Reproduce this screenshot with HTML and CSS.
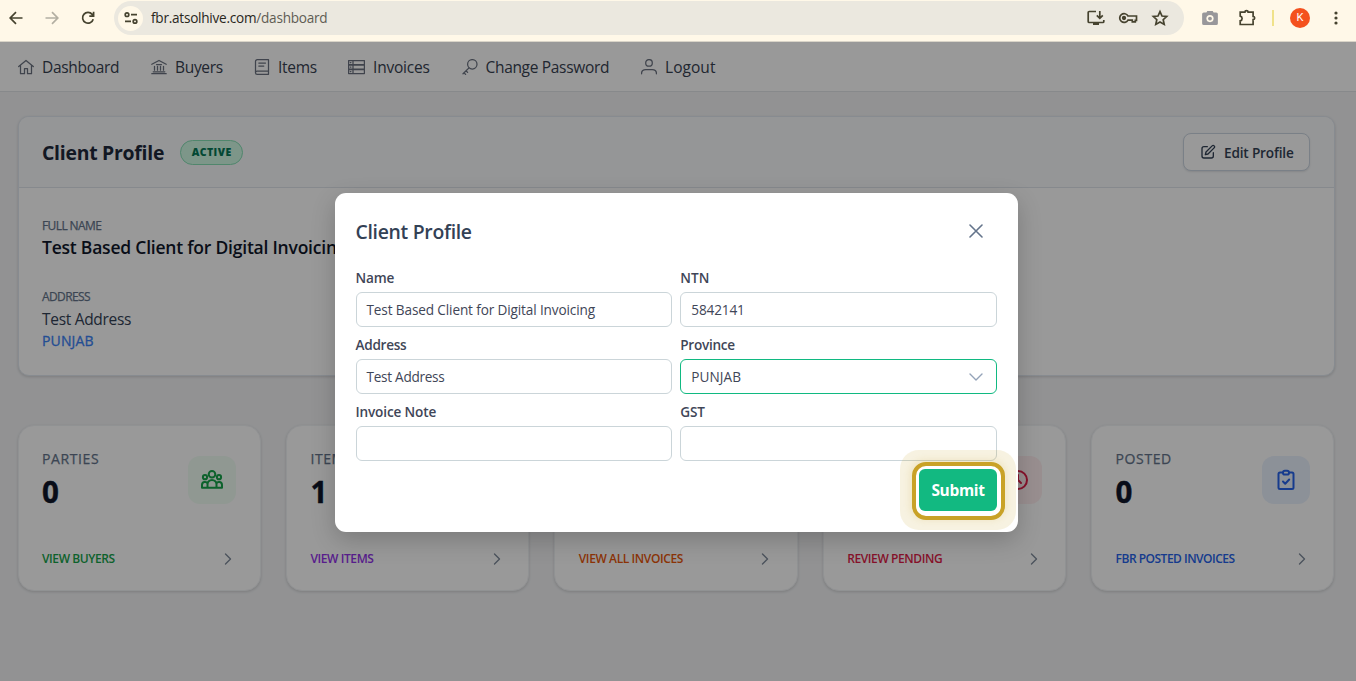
FILE: index.html
```html
<!DOCTYPE html>
<html lang="en">
<head>
<meta charset="utf-8">
<title>Dashboard</title>
<link rel="stylesheet" href="styles.css">
</head>
<body>
<header class="chrome">
  <div class="chrome-nav">
    <svg width="20" height="20" viewBox="0 0 20 20" class="ci"><path d="M16.5 10H4.5M10 4.2L4.2 10l5.800 5.800"/></svg>
    <svg width="20" height="20" viewBox="0 0 20 20" class="ci faded"><path d="M3.500 10h12M10 4.200l5.800 5.800-5.800 5.800"/></svg>
    <svg width="20" height="20" viewBox="0 0 20 20" class="ci"><path d="M15.200 11.200A5.400 5.400 0 1 1 14.200 6.400L15.400 7.800M15.600 3.800v4.300h-4.300"/></svg>
  </div>
  <div class="omnibox">
    <span class="site"><svg width="16" height="16" viewBox="0 0 16 16" class="ci"><circle cx="4" cy="4.700" r="1.800"/><path d="M8 4.700h6M2 11.400h6"/><circle cx="12" cy="11.400" r="1.800"/></svg></span>
    <span class="url"><span class="url-host">fbr.atsolhive.com</span><span class="url-path">/dashboard</span></span>
    <span class="omni-icons">
      <svg width="20" height="20" viewBox="0 0 20 20" class="ci"><path d="M10 3.500H3.200a1 1 0 0 0-1 1v9a1 1 0 0 0 1 1h13.600a1 1 0 0 0 1-1V12M13.800 3v7M10.800 7.400l3 3 3-3M7 16.200h6"/></svg>
      <svg width="20" height="20" viewBox="0 0 20 20" class="ci"><path d="M10 8h8.500v4.400h-1.200v1.500h-3v-1.800H10A4.400 4.400 0 1 1 10 8z"/><circle cx="6" cy="10" r="1.300" class="solid"/></svg>
      <svg width="20" height="20" viewBox="0 0 20 20" class="ci"><path d="M10 3.600l2 4.400 4.700.5-3.500 3.200 1 4.700-4.200-2.500-4.200 2.500 1-4.700L3.300 8.500l4.700-.5z"/></svg>
    </span>
  </div>
  <svg width="18" height="18" viewBox="0 0 16 16" class="camera"><path d="M4.800 3L5.600 1.700h4.800L11.200 3h2.300A1.500 1.500 0 0 1 15 4.500v8.300a1.500 1.500 0 0 1-1.500 1.500h-11A1.500 1.500 0 0 1 1 12.800V4.500A1.500 1.500 0 0 1 2.500 3z"/><circle cx="8" cy="8.500" r="3.200" class="lens"/><circle cx="8" cy="8.500" r="1.700"/></svg>
  <svg width="20" height="20" viewBox="0 0 20 20" class="ci ext"><path d="M3.200 4.200h4.700a1.600 1.600 0 0 1 3.200 0h5v4.300a1.600 1.600 0 0 1 0 3.200v4.800H3.200v-3.700a2.400 2.400 0 0 0 0-4.700z"/></svg>
  <span class="sep"></span>
  <span class="avatar">K</span>
  <svg width="6" height="16" viewBox="0 0 6 16" class="dots"><circle cx="3" cy="3" r="1.600"/><circle cx="3" cy="8" r="1.600"/><circle cx="3" cy="13" r="1.600"/></svg>
</header>
<div class="app">
  <nav class="nav">
    <a class="n1"><svg width="16" height="16" viewBox="0 0 16 16"><path d="M.7 7.600L8 1.500l7.300 6.100M2.500 6.500v8.200h4v-5.200h3v5.200h4V6.500"/></svg><span>Dashboard</span></a>
    <a class="n2"><svg width="16" height="16" viewBox="0 0 16 16"><path d="M.8 5.300L8 1.500l7.200 3.800M5.500 5.500h5M.8 14.700h14.400M2.200 12.800h11.600M3.500 7.300v3.900M6.500 7.300v3.900M9.500 7.300v3.900M12.500 7.300v3.900"/></svg><span>Buyers</span></a>
    <a class="n3"><svg width="16" height="16" viewBox="0 0 16 16"><path d="M14.500 12V.7H3.200A1.700 1.700 0 0 0 1.500 2.400v11.300A1.600 1.600 0 0 0 3.100 15.300h11.400V12H3.100a1.600 1.600 0 0 0-1.600 1.600M4.800 4h6.700M4.800 7h5"/></svg><span>Items</span></a>
    <a class="n4"><svg width="17" height="16" viewBox="0 0 17 16"><path d="M.6 1.500h15.800v4H.6zM.6 6h15.800v4H.6zM.6 10.500h15.800v4H.6zM2.300 3.500h.6M2.300 8h.6M2.300 12.500h.6M5 1.500v13"/></svg><span>Invoices</span></a>
    <a class="n5"><svg width="16" height="16" viewBox="0 0 16 16"><circle cx="10.300" cy="5.300" r="4.700"/><path d="M7 8.900L1 14.800M2 13.800l1.600 1.600M4 11.800l1.600 1.600"/></svg><span>Change Password</span></a>
    <a class="n6"><svg width="16" height="16" viewBox="0 0 16 16"><circle cx="8" cy="3.900" r="3.300"/><path d="M.6 14.800v-.6c0-2.400 2-3.700 4.200-3.700h6.400c2.200 0 4.200 1.300 4.200 3.700v.6"/></svg><span>Logout</span></a>
  </nav>
  <main class="main">
    <section class="profile">
      <div class="profile-head">
        <h2>Client Profile</h2>
        <span class="badge">ACTIVE</span>
        <button class="edit"><svg width="16" height="16" viewBox="0 0 24 24"><path d="M11 4H6a3 3 0 0 0-3 3v11a3 3 0 0 0 3 3h11a3 3 0 0 0 3-3v-5M18.200 2.800a2.100 2.100 0 0 1 3 3L12 15l-4 1 1-4z"/></svg><span>Edit Profile</span></button>
      </div>
      <div class="profile-body">
        <div class="cap">FULL NAME</div>
        <div class="full">Test Based Client for Digital Invoicing</div>
        <div class="cap cap2">ADDRESS</div>
        <div class="addr">Test Address</div>
        <div class="prov">PUNJAB</div>
      </div>
    </section>
    <section class="cards">
      <article class="card green">
        <div class="top"><div><div class="lab">PARTIES</div><div class="num">0</div></div>
        <span class="tile"><svg width="24" height="24" viewBox="0 0 24 24"><circle cx="12" cy="6.300" r="3.300"/><circle cx="5" cy="9.200" r="2.100"/><circle cx="19" cy="9.200" r="2.100"/><path d="M7.500 19.800v-3.300a4.500 4.500 0 0 1 9 0v3.300zM7.500 19.800H2v-2.600a3 3 0 0 1 5.700-1.500M16.500 19.800H22v-2.600a3 3 0 0 0-5.700-1.500"/></svg></span></div>
        <div class="foot"><span>VIEW BUYERS</span><svg class="chev" width="8" height="12" viewBox="0 0 8 12"><path d="M1.500 1l5 5-5 5"/></svg></div>
      </article>
      <article class="card purple">
        <div class="top"><div><div class="lab">ITEMS</div><div class="num">1</div></div></div>
        <div class="foot"><span>VIEW ITEMS</span><svg class="chev" width="8" height="12" viewBox="0 0 8 12"><path d="M1.500 1l5 5-5 5"/></svg></div>
      </article>
      <article class="card orange">
        <div class="top"><div><div class="lab">INVOICES</div><div class="num">0</div></div></div>
        <div class="foot"><span>VIEW ALL INVOICES</span><svg class="chev" width="8" height="12" viewBox="0 0 8 12"><path d="M1.500 1l5 5-5 5"/></svg></div>
      </article>
      <article class="card rose">
        <div class="top"><div><div class="lab">PENDING</div><div class="num">0</div></div>
        <span class="tile"><svg width="24" height="24" viewBox="0 0 24 24"><circle cx="12" cy="12" r="9"/><path d="M12 7v5l3 3"/></svg></span></div>
        <div class="foot"><span>REVIEW PENDING</span><svg class="chev" width="8" height="12" viewBox="0 0 8 12"><path d="M1.500 1l5 5-5 5"/></svg></div>
      </article>
      <article class="card blue">
        <div class="top"><div><div class="lab">POSTED</div><div class="num">0</div></div>
        <span class="tile"><svg width="24" height="24" viewBox="0 0 24 24"><path d="M9 4.500H6A1.500 1.500 0 0 0 4.500 6v13.500A1.500 1.500 0 0 0 6 21h12a1.500 1.500 0 0 0 1.500-1.500V6A1.500 1.500 0 0 0 18 4.500h-3"/><rect x="9" y="2.800" width="6" height="3.800" rx="1.900"/><path d="M9 13.500l2.200 2.200 4-4.200"/></svg></span></div>
        <div class="foot"><span>FBR POSTED INVOICES</span><svg class="chev" width="8" height="12" viewBox="0 0 8 12"><path d="M1.500 1l5 5-5 5"/></svg></div>
      </article>
    </section>
  </main>
  <div class="overlay">
    <div class="modal">
      <div class="modal-head"><h3>Client Profile</h3><svg width="14" height="14" viewBox="0 0 14 14"><path d="M1 1l12 12M13 1L1 13"/></svg></div>
      <div class="form">
        <label><b>Name</b><span class="field"><span>Test Based Client for Digital Invoicing</span></span></label>
        <label><b class="wide">NTN</b><span class="field"><span>5842141</span></span></label>
        <label><b class="tight">Address</b><span class="field"><span class="tight">Test Address</span></span></label>
        <label><b class="tight">Province</b><span class="field focus"><span>PUNJAB</span><svg width="14" height="8" viewBox="0 0 14 8"><path d="M1 1l6 6 6-6"/></svg></span></label>
        <label><b>Invoice Note</b><span class="field"></span></label>
        <label><b>GST</b><span class="field"></span></label>
      </div>
      <div class="actions"><button class="submit">Submit</button></div>
    </div>
  </div>
</div>
</body>
</html>
```
FILE: styles.css
```css
* { box-sizing: border-box; }
body { margin: 0; font-family: "Open Sans", "Noto Sans", sans-serif; height: 681px; overflow: hidden; display: flex; flex-direction: column; white-space: nowrap; }
h2, h3 { margin: 0; }
button { font-family: inherit; }
svg { fill: none; stroke-linecap: round; stroke-linejoin: round; flex: none; }

.chrome { height: 42px; flex: none; background: #fff8e8; border-bottom: 1px solid #d9d4c8; display: flex; align-items: center; padding: 0 17px 5px 6px; }
.ci { stroke: #46432f; stroke-width: 1.7; stroke-linecap: butt; stroke-linejoin: miter; }
.ci .solid { fill: #46432f; }
.faded { stroke: #b3afa2; }
.chrome-nav { display: flex; gap: 16px; width: 108px; }
.omnibox { display: flex; align-items: center; width: 1070px; height: 34px; border-radius: 17px; background: #ebe8df; padding: 0 14px 0 4px; }
.site { width: 25px; height: 25px; border-radius: 50%; background: #fff8e8; display: flex; align-items: center; justify-content: center; }
.url { margin-left: 8px; font-size: 13.6px; letter-spacing: -.25px; flex: 1; display: flex; padding-bottom: 1px; }
.url-host { color: #29271d; }
.url-path { color: #5f5d53; }
.omni-icons { display: flex; gap: 12px; }
.camera { margin-left: 17px; fill: #98979a; }
.lens { fill: #fff8e8; }
.ext { margin-left: 18px; }
.sep { width: 2px; height: 16px; background: #f0e28a; margin-left: 15px; }
.avatar { width: 20px; height: 20px; border-radius: 50%; background: #f4511e; color: #fff; font: 11px/20px Roboto, sans-serif; text-align: center; margin-left: 16px; }
.dots { fill: #46432f; margin-left: auto; }

.app { flex: 1; position: relative; background: #f3f4f6; }
.nav { height: 50px; background: #fff; border-bottom: 1px solid #e2e4e8; display: flex; align-items: center; padding: 1px 0 0 18px; color: #374151; font-size: 15.5px; letter-spacing: -.32px; }
.nav a { display: flex; align-items: center; gap: 8px; }
.nav svg { stroke: #6b7280; stroke-width: 1.25; }
.n1 { width: 133px; }
.n2 { width: 103px; }
.n3 { width: 94px; letter-spacing: -.3px; }
.n4 { width: 113.5px; letter-spacing: -.2px; }
.n5 { width: 179.5px; }
.n6 { letter-spacing: .05px; }

.main { padding: 24px 21.5px 0 17.5px; }
.profile { height: 260px; background: #fff; border: 1px solid #e2e8f0; border-radius: 11px; overflow: hidden; box-shadow: 0 1px 3px rgba(0,0,0,.15); }
.profile-head { height: 71px; background: #f8fafc; border-bottom: 1px solid #dfe5ec; display: flex; align-items: center; padding: 0 23.5px; }
h2 { font-size: 19.4px; font-weight: 700; color: #1e293b; letter-spacing: -.25px; }
.badge { margin-left: 16px; height: 25px; width: 63px; border-radius: 13px; background: #d1fae5; border: 1px solid #86dfb5; color: #047857; font-size: 10.5px; letter-spacing: .42px; font-weight: 800; display: flex; align-items: center; justify-content: center; }
.edit { margin-left: auto; width: 127px; height: 38px; border: 1px solid #cbd5e1; border-radius: 8px; background: #fff; color: #334155; font-size: 13.6px; letter-spacing: -.17px; font-weight: 600; display: flex; align-items: center; gap: 8px; padding: 0 16px; box-shadow: 0 1px 2px rgba(0,0,0,.1); }
.edit svg { stroke: #334155; stroke-width: 2; }
.profile-body { padding: 28.5px 23.5px; }
.cap { color: #64748b; font-size: 12px; line-height: 18px; font-weight: 500; letter-spacing: -.6px; -webkit-text-stroke: .25px #64748b; }
.full { font-size: 17.5px; line-height: 26px; margin-top: -1px; font-weight: 600; color: #0f172a; letter-spacing: -.22px; }
.cap2 { margin-top: 28px; }
.addr { font-size: 15.5px; line-height: 24px; color: #334155; margin-top: 1px; letter-spacing: -.3px; }
.prov { font-size: 14px; line-height: 20px; font-weight: 500; color: #3b82f6; letter-spacing: .15px; -webkit-text-stroke: .3px #3b82f6; }

.cards { display: grid; grid-template-columns: repeat(5, 1fr); gap: 25px; margin-top: 48.5px; }
.card { height: 166px; background: #fff; border-radius: 16px; border: 1px solid #f1f3f6; box-shadow: 0 1px 3px rgba(0,0,0,.15); padding: 23px 23.5px 0; }
.top { display: flex; justify-content: space-between; height: 94px; }
.lab { font-size: 14px; line-height: 20px; font-weight: 500; color: #64748b; letter-spacing: .6px; -webkit-text-stroke: .25px #64748b; }
.num { font-size: 29.5px; line-height: 36px; font-weight: 700; color: #0f172a; margin-top: 5px; -webkit-text-stroke: .4px #0f172a; }
.tile { width: 48px; height: 48px; border-radius: 12px; margin-top: 7px; display: flex; align-items: center; justify-content: center; }
.tile svg { stroke: currentColor; stroke-width: 2; }
.green .tile { background: #f0fdf4; }
.rose .tile { background: #ffeef0; }
.blue .tile { background: #eaf2fe; }
.green { color: #16a34a; }
.purple { color: #9333ea; }
.orange { color: #ea580c; }
.rose { color: #e11d48; }
.blue { color: #2563eb; }
.foot { display: flex; justify-content: space-between; align-items: center; font-size: 12px; line-height: 32px; font-weight: 600; padding-right: 4px; letter-spacing: -.4px; }
.blue .foot { letter-spacing: -.5px; }
.chev { stroke: #7f8a9b; stroke-width: 1.4; }

.overlay { position: absolute; inset: 0; background: rgba(0,0,0,.4); }
.modal { width: 683px; height: 338.5px; margin: 151px 0 0 335px; background: #fff; border-radius: 11px; padding: 20px 21px 20px 20.5px; box-shadow: 0 8px 24px rgba(0,0,0,.2); color: #334155; }
.modal-head { display: flex; justify-content: space-between; align-items: center; height: 36px; padding-right: 14px; }
.modal-head svg { stroke: #64748b; stroke-width: 1.6; }
h3 { font-size: 19.4px; line-height: 36px; font-weight: 600; letter-spacing: -.3px; padding-top: 1px; }
.form { display: grid; grid-template-columns: 1fr 1fr; column-gap: 8px; margin-top: 15px; }
.form label { height: 67px; }
.form b { display: block; font-size: 13.6px; line-height: 28px; height: 28px; font-weight: 600; color: #3f4657; letter-spacing: -.15px; }
.field { display: flex; align-items: center; justify-content: space-between; height: 35px; border: 1px solid #cbd5d9; border-radius: 6px; padding: 0 13px 0 10px; font-size: 13.6px; letter-spacing: -.13px; color: #3f4657; }
.form .tight { letter-spacing: -.28px; }
.form .wide { letter-spacing: .1px; }
.field svg { stroke: #94a3b8; stroke-width: 1.4; }
.focus { border-color: #10b981; }
.focus span { letter-spacing: .1px; }
.actions { display: flex; justify-content: flex-end; margin-top: 4px; }
.submit { position: relative; width: 78px; height: 42px; border: 0; padding: 0; border-radius: 6px; background: #12b981; color: #fff; font-size: 15.5px; letter-spacing: -.35px; font-weight: 700; box-shadow: 0 0 0 5px #fff, 0 0 7px 9px rgba(201,162,39,.16), 0 0 0 19px rgba(201,162,39,.14); }
/* Gold focus ring drawn around the button */
.submit::before { content: ""; position: absolute; inset: -7px -8px -9px -7px; border: 4px solid #c9a227; border-radius: 14px; }
```
